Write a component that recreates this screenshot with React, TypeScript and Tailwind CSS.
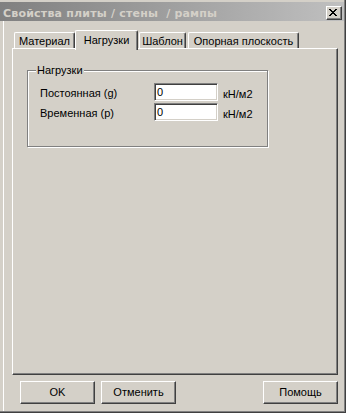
export default function App() {
  const raised =
    "border border-t-white border-l-white border-r-[#404040] border-b-[#404040] shadow-[inset_-1px_-1px_0_#808080]";
  const sunken =
    "border border-t-[#808080] border-l-[#808080] border-r-white border-b-white shadow-[inset_1px_1px_0_#404040,inset_-1px_-1px_0_#d4d0c8]";
  const tab =
    "h-[16px] flex justify-center pt-[3px] border-l border-t border-white border-r border-r-[#404040] rounded-t-[2px] shadow-[inset_-1px_0_0_#808080] whitespace-nowrap";
  const X = [
    "XX....XX",
    ".XX..XX.",
    "..XXXX..",
    "...XX...",
    "..XXXX..",
    ".XX..XX.",
    "XX....XX",
  ];
  return (
    <div className="w-[349px] h-[417px] bg-white font-['Liberation_Sans',Arial,sans-serif] text-[11px] text-black leading-[11px]">
      <div className="w-[346px] h-[413px] bg-[#d4d0c8] border-r border-b border-[#404040] flex flex-col">
        <div className="flex-1 flex flex-col border-r border-b border-[#808080] pt-[2px]">
          {/* Title bar */}
          <div className="h-[19px] flex items-start justify-between pl-[3px] pr-[2px] bg-linear-to-r from-[#808080] to-[#c0c0c0]">
            <span className="pt-[6px] font-['DejaVu_Sans',sans-serif] font-bold tracking-[0.2px] text-[#d4d0c8] whitespace-pre">
              Свойства плиты / стены  / рампы
            </span>
            <div className={`mt-[4px] w-[16px] h-[14px] bg-[#d4d0c8] pl-[2px] pt-[2px] ${raised}`}>
              <svg width="8" height="7" viewBox="0 0 8 7" shapeRendering="crispEdges">
                {X.flatMap((row, y) =>
                  row.split("").map((c, x) =>
                    c === "X" ? <rect key={`${x}-${y}`} x={x} y={y} width="1" height="1" fill="#000" /> : null
                  )
                )}
              </svg>
            </div>
          </div>

          {/* Body */}
          <div className="flex-1 ml-[3px] border-l border-white flex flex-col pl-[8px] pt-[9px]">
            {/* Tabs */}
            <div className="flex items-end h-[18px] ml-[2px]">
              <div className={`${tab} w-[61px]`}>Материал</div>
              <div className="relative z-10 w-[63px] h-[20px] -mb-[2px] flex justify-center pt-[4px] bg-[#d4d0c8] border-l border-t border-white border-r border-r-[#404040] rounded-t-[2px] shadow-[inset_-1px_0_0_#808080] whitespace-nowrap">
                Нагрузки
              </div>
              <div className={`${tab} w-[47px] ml-[1px]`}>Шаблон</div>
              <div className={`${tab} w-[111px] ml-[2px]`}>Опорная плоскость</div>
            </div>

            {/* Panel */}
            <div className="w-[326px] h-[327px] border border-t-white border-l-white border-r-[#404040] border-b-[#404040] shadow-[inset_-1px_-1px_0_#808080]">
              <div className="relative ml-[14px] mt-[21px] w-[241px] h-[77px] border border-[#808080] shadow-[inset_1px_1px_0_#fff,1px_1px_0_#fff]">
                <span className="absolute left-[8px] top-[-6px] px-[1px] bg-[#d4d0c8] whitespace-nowrap">
                  Нагрузки
                </span>
                <div className="flex flex-col gap-[2px] mt-[12px] pl-[12px]">
                  {[
                    ["Постоянная (g)", "0"],
                    ["Временная (p)", "0"],
                  ].map(([label, v]) => (
                    <div key={label} className="flex items-start h-[18px]">
                      <span className="w-[114px] pt-[5px] whitespace-nowrap">{label}</span>
                      <div className={`w-[64px] h-[18px] bg-white pl-[2px] pt-[3px] ${sunken}`}>{v}</div>
                      <span className="ml-[5px] pt-[6px] whitespace-nowrap">кН/м2</span>
                    </div>
                  ))}
                </div>
              </div>
            </div>

            {/* Buttons */}
            <div className="flex mt-[6px] ml-[8px] w-[318px]">
              <button className={`w-[75px] h-[23px] flex items-center justify-center ${raised}`}>OK</button>
              <button className={`w-[75px] h-[23px] ml-[6px] flex items-center justify-center ${raised}`}>
                Отменить
              </button>
              <button className={`w-[75px] h-[23px] ml-auto flex items-center justify-center ${raised}`}>
                Помощь
              </button>
            </div>
          </div>
        </div>
      </div>
    </div>
  );
}
